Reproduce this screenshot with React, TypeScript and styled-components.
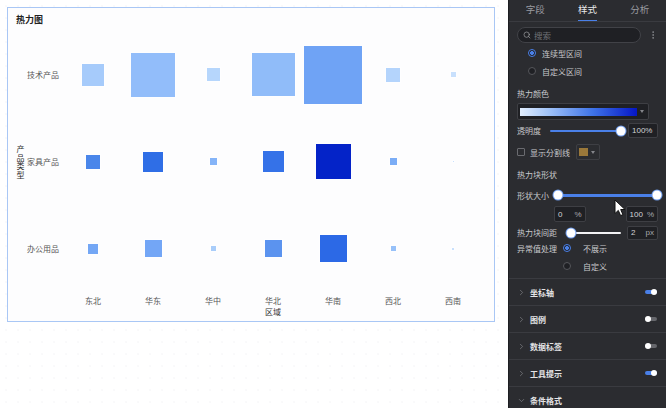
import React from 'react';
import styled, { createGlobalStyle } from 'styled-components';
import { Search, EllipsisVertical, ChevronRight, ChevronDown } from 'lucide-react';

const GlobalStyle = createGlobalStyle`
  html, body {
    margin: 0;
    padding: 0;
    background: #fff;
    font-family: "Noto Sans CJK SC", "Noto Sans", sans-serif;
  }
`;

const ROWS = ['技术产品', '家具产品', '办公用品'];
const COLS = ['东北', '华东', '华中', '华北', '华南', '西北', '西南'];

const CELLS: [number, string][][] = [
  [[22, '#a6cbfb'], [44, '#92bdfa'], [13, '#b6d6fc'], [43, '#90bcf9'], [58, '#6fa3f5'], [14, '#b4d4fc'], [5, '#c8e0fd']],
  [[14, '#4a86ea'], [20, '#2f6ee6'], [7, '#85b4f8'], [21, '#3572e8'], [35, '#0423c8'], [7, '#7badf6'], [1, '#c8e0fd']],
  [[10, '#74a7f5'], [17, '#73a6f6'], [5, '#a9cdfa'], [17, '#5b93ef'], [27, '#2c69e6'], [5, '#97c1f9'], [2, '#c8e0fd']],
];

const SECTIONS = [
  { name: '坐标轴', on: true },
  { name: '图例', on: false },
  { name: '数据标签', on: false },
  { name: '工具提示', on: true },
];

type SliderProps = { width: number; from: number; to: number; knobs: number[]; rest: string; thick: number };

const Slider = ({ width, from, to, knobs, rest, thick }: SliderProps): JSX.Element => (
  <Track
    $thick={thick}
    style={{
      width,
      background: `linear-gradient(90deg, ${rest} 0 ${from}%, #4a80e8 ${from}% ${to}%, ${rest} ${to}% 100%)`,
    }}
  >
    {knobs.map((k) => (
      <Knob key={k} style={{ left: `${k}%` }} />
    ))}
  </Track>
);

const Heatmap = (): JSX.Element => (
  <ChartCard>
    <ChartTitle>热力图</ChartTitle>
    <ChartBody>
      <AxisY>
        <AxisYText>产品类型</AxisYText>
      </AxisY>
      <RowLabels>
        {ROWS.map((r) => (
          <RowLabel key={r}>{r}</RowLabel>
        ))}
      </RowLabels>
      <Plot>
        {CELLS.map((row, ri) =>
          row.map(([size, color], ci) => (
            <Cell key={`${ri}-${ci}`}>
              <Square $size={size} $color={color} />
            </Cell>
          ))
        )}
      </Plot>
    </ChartBody>
    <XLabels>
      {COLS.map((c) => (
        <XLabel key={c}>{c}</XLabel>
      ))}
    </XLabels>
    <AxisX>区域</AxisX>
  </ChartCard>
);

const StylePanel = (): JSX.Element => (
  <Panel>
    <Tabs>
      <Tab>
        <TabLabel>字段</TabLabel>
      </Tab>
      <Tab $active>
        <TabLabel>样式</TabLabel>
        <TabLine />
      </Tab>
      <Tab>
        <TabLabel>分析</TabLabel>
      </Tab>
    </Tabs>
    <SearchRow>
      <SearchBox>
        <Search size={8} strokeWidth={2} color="#a3a4a8" />
        <Placeholder>搜索</Placeholder>
      </SearchBox>
      <MoreBtn>
        <EllipsisVertical size={10} color="#8a8b90" />
      </MoreBtn>
    </SearchRow>

    <Form>
      <Row $h={18} $mt={1} $indent={11}>
        <Radio $checked />
        <Label>连续型区间</Label>
      </Row>
      <Row $h={18} $indent={11}>
        <Radio />
        <Label>自定义区间</Label>
      </Row>
      <Row $h={18} $mt={4}>
        <Label>热力颜色</Label>
      </Row>
      <GradientSelect>
        <GradientBar />
        <Caret />
      </GradientSelect>
      <Row $h={17} $mt={2}>
        <FieldLabel $w={33}>透明度</FieldLabel>
        <Slider width={71} from={0} to={100} knobs={[100]} rest="#e6e6e8" thick={2} />
        <Input $w={32} $ml={7} $h={15}>
          <span>100%</span>
        </Input>
      </Row>
      <Row $h={16} $mt={5}>
        <Checkbox />
        <Label $ml={5}>显示分割线</Label>
        <ColorSelect>
          <Swatch />
          <Caret />
        </ColorSelect>
      </Row>
      <Row $h={18} $mt={5}>
        <Label>热力块形状</Label>
      </Row>
      <Row $h={16} $mt={4}>
        <FieldLabel $w={41}>形状大小</FieldLabel>
        <Slider width={99} from={0} to={100} knobs={[0, 100]} rest="#e6e6e8" thick={3} />
      </Row>
      <Row $h={16} $mt={3} $indent={37}>
        <Input $w={33} $h={16}>
          <span>0</span>
          <Unit>%</Unit>
        </Input>
        <Input $w={34} $ml={40} $h={16}>
          <span>100</span>
          <Unit>%</Unit>
        </Input>
      </Row>
      <Row $h={15} $mt={3}>
        <FieldLabel $w={51}>热力块间距</FieldLabel>
        <Slider width={53} from={0} to={6} knobs={[6]} rest="#f2f2f4" thick={2} />
        <Input $w={34} $ml={6} $h={14}>
          <span>2</span>
          <Unit>px</Unit>
        </Input>
      </Row>
      <Row $h={16}>
        <FieldLabel $w={46}>异常值处理</FieldLabel>
        <Radio $checked />
        <Label $ml={6}>不展示</Label>
      </Row>
      <Row $h={16} $mt={2} $indent={46}>
        <Radio />
        <Label $ml={6}>自定义</Label>
      </Row>
    </Form>

    <Sections>
      {SECTIONS.map((s) => (
        <SectionRow key={s.name}>
          <ChevronRight size={9} color="#8d8e93" strokeWidth={1.6} />
          <SectionName>{s.name}</SectionName>
          <Toggle $on={s.on}>
            <ToggleKnob $on={s.on} />
          </Toggle>
        </SectionRow>
      ))}
      <SectionRow>
        <ChevronDown size={9} color="#8d8e93" strokeWidth={1.6} />
        <SectionName>条件格式</SectionName>
      </SectionRow>
    </Sections>
  </Panel>
);

const App = (): JSX.Element => {
  return (
    <Page>
      <GlobalStyle />
      <Canvas>
        <Heatmap />
      </Canvas>
      <StylePanel />
      <Cursor width="13" height="18" viewBox="0 0 13 18">
        <path d="M1 1 L1 14.5 L4.3 11.4 L6.6 16.6 L8.9 15.6 L6.7 10.5 L11 10.5 Z" fill="#fff" stroke="#111" strokeWidth="1" strokeLinejoin="round" />
      </Cursor>
    </Page>
  );
};

export default App;

const Page = styled.div`
  position: relative;
  display: flex;
  width: 666px;
  height: 408px;
  overflow: hidden;
`;

const Canvas = styled.div`
  flex: 1;
  padding: 7px;
  background-color: #fff;
  background-image: radial-gradient(#f3f3f5 0.6px, transparent 0.8px);
  background-size: 12px 12px;
`;

const ChartCard = styled.div`
  box-sizing: border-box;
  width: 488px;
  height: 315px;
  border: 1px solid #a9c7f5;
  background: #fdfdfe;
  display: flex;
  flex-direction: column;
`;

const ChartTitle = styled.div`
  padding: 6px 0 0 8px;
  font-size: 9px;
  line-height: 12px;
  font-weight: 700;
  color: #222;
`;

const ChartBody = styled.div`
  display: flex;
  margin-top: 5px;
  height: 261px;
`;

const AxisY = styled.div`
  box-sizing: border-box;
  width: 19px;
  padding-left: 7px;
  display: flex;
  align-items: center;
`;

const AxisYText = styled.div`
  writing-mode: vertical-lr;
  text-orientation: upright;
  font-size: 8px;
  line-height: 10px;
  letter-spacing: 0.5px;
  color: #2a2a2a;
`;

const RowLabels = styled.div`
  width: 36px;
  display: flex;
  flex-direction: column;
`;

const RowLabel = styled.div`
  height: 87px;
  display: flex;
  align-items: center;
  font-size: 8px;
  color: #555;
`;

const Plot = styled.div`
  display: grid;
  grid-template-columns: repeat(7, 60px);
  grid-template-rows: repeat(3, 87px);
`;

const Cell = styled.div`
  display: flex;
  align-items: center;
  justify-content: center;
`;

const Square = styled.div<{ $size: number; $color: string }>`
  width: ${(p) => p.$size}px;
  height: ${(p) => p.$size}px;
  background: ${(p) => p.$color};
  box-shadow: 0 0 0 1px rgba(255, 255, 255, 0.55);
`;

const XLabels = styled.div`
  display: grid;
  grid-template-columns: repeat(7, 60px);
  margin: 4px 0 0 55px;
`;

const XLabel = styled.div`
  text-align: center;
  font-size: 8px;
  line-height: 10px;
  color: #555;
`;

const AxisX = styled.div`
  width: 420px;
  margin: 1px 0 0 55px;
  text-align: center;
  font-size: 8px;
  line-height: 10px;
  color: #333;
`;

const Panel = styled.div`
  box-sizing: border-box;
  width: 158px;
  height: 408px;
  flex-shrink: 0;
  overflow: hidden;
  background: #2b2c30;
  border-left: 1px solid #1d1e22;
`;

const Tabs = styled.div`
  display: flex;
  height: 22px;
  box-sizing: border-box;
  border-bottom: 1px solid #3a3b40;
`;

const Tab = styled.div<{ $active?: boolean }>`
  flex: 1;
  display: flex;
  flex-direction: column;
  align-items: center;
  font-size: 9.5px;
  color: ${(p) => (p.$active ? '#e9e9eb' : '#9a9ba0')};
`;

const TabLabel = styled.div`
  padding-top: 3px;
  line-height: 12px;
`;

const TabLine = styled.div`
  margin-top: auto;
  width: 19px;
  height: 1.5px;
  background: #4a80e8;
`;

const SearchRow = styled.div`
  display: flex;
  align-items: center;
  height: 16px;
  margin-top: 5px;
  padding: 0 8px;
`;

const SearchBox = styled.div`
  box-sizing: border-box;
  width: 124px;
  height: 16px;
  border: 1px solid #414247;
  border-radius: 8px;
  background: #1f2024;
  display: flex;
  align-items: center;
  gap: 3px;
  padding-left: 5px;
`;

const Placeholder = styled.span`
  font-size: 8.5px;
  color: #6f7075;
`;

const MoreBtn = styled.div`
  margin-left: auto;
  display: flex;
  align-items: center;
`;

const Form = styled.div`
  display: flex;
  flex-direction: column;
  padding: 0 8px;
`;

const Row = styled.div<{ $h: number; $mt?: number; $indent?: number }>`
  display: flex;
  flex-shrink: 0;
  align-items: center;
  height: ${(p) => p.$h}px;
  margin-top: ${(p) => p.$mt ?? 0}px;
  padding-left: ${(p) => p.$indent ?? 0}px;
`;

const Label = styled.span<{ $ml?: number }>`
  font-size: 8px;
  color: #c8c9cc;
  margin-left: ${(p) => p.$ml ?? 0}px;
  white-space: nowrap;
`;

const FieldLabel = styled.span<{ $w: number }>`
  width: ${(p) => p.$w}px;
  flex-shrink: 0;
  font-size: 8px;
  color: #c8c9cc;
  white-space: nowrap;
`;

const Radio = styled.span<{ $checked?: boolean }>`
  box-sizing: border-box;
  width: 8px;
  height: 8px;
  border-radius: 50%;
  margin-right: 6px;
  border: 1px solid ${(p) => (p.$checked ? '#4a80e8' : '#55565b')};
  background: ${(p) => (p.$checked ? 'radial-gradient(#4a80e8 0 1.8px, #1f2024 2.2px)' : '#1f2024')};
`;

const Checkbox = styled.span`
  box-sizing: border-box;
  width: 8px;
  height: 8px;
  border: 1px solid #6a6b70;
  border-radius: 1px;
`;

const GradientSelect = styled.div`
  box-sizing: border-box;
  width: 132px;
  height: 17px;
  flex-shrink: 0;
  margin-top: 1px;
  border: 1px solid #3e3f44;
  border-radius: 2px;
  background: #1f2024;
  display: flex;
  align-items: center;
  padding: 0 4px 0 2px;
`;

const GradientBar = styled.div`
  width: 117px;
  height: 8px;
  background: linear-gradient(90deg, #e2eefe 0%, #9fc2f8 25%, #3f74e8 62%, #0516c6 100%);
`;

const Caret = styled.span`
  margin-left: auto;
  width: 0;
  height: 0;
  border-left: 2.5px solid transparent;
  border-right: 2.5px solid transparent;
  border-top: 3px solid #85868b;
`;

const Track = styled.div<{ $thick: number }>`
  position: relative;
  flex-shrink: 0;
  height: ${(p) => p.$thick}px;
  border-radius: 2px;
`;

const Knob = styled.span`
  position: absolute;
  top: 50%;
  width: 9px;
  height: 9px;
  border-radius: 50%;
  background: #fff;
  box-shadow: 0 0 0 1px #6f9cec;
  transform: translate(-50%, -50%);
`;

const Input = styled.div<{ $w: number; $ml?: number; $h: number }>`
  box-sizing: border-box;
  width: ${(p) => p.$w}px;
  height: ${(p) => p.$h}px;
  margin-left: ${(p) => p.$ml ?? 0}px;
  border: 1px solid #3e3f44;
  border-radius: 2px;
  background: #1f2024;
  display: flex;
  align-items: center;
  justify-content: space-between;
  padding: 0 3px;
  font-family: "Liberation Sans", sans-serif;
  font-size: 8px;
  color: #d2d3d6;
`;

const Unit = styled.span`
  color: #a8a9ad;
`;

const ColorSelect = styled.div`
  box-sizing: border-box;
  width: 24px;
  height: 16px;
  margin-left: 6px;
  border: 1px solid #3e3f44;
  border-radius: 2px;
  display: flex;
  align-items: center;
  padding: 0 4px 0 2px;
`;

const Swatch = styled.span`
  width: 9px;
  height: 8px;
  background: #9a783a;
`;

const Sections = styled.div`
  margin-top: 4px;
  border-top: 1px solid #3a3b40;
`;

const SectionRow = styled.div`
  display: flex;
  align-items: center;
  height: 26px;
  border-bottom: 1px solid #3a3b40;
  padding: 0 9px 0 8px;
  gap: 4px;
`;

const SectionName = styled.span`
  font-size: 8px;
  font-weight: 700;
  color: #e3e3e5;
`;

const Toggle = styled.div<{ $on: boolean }>`
  position: relative;
  margin-left: auto;
  width: 12px;
  height: 4px;
  border-radius: 2px;
  background: ${(p) => (p.$on ? '#4a80e8' : '#66676c')};
`;

const ToggleKnob = styled.span<{ $on: boolean }>`
  position: absolute;
  top: 50%;
  left: ${(p) => (p.$on ? '9px' : '3px')};
  width: 6px;
  height: 6px;
  border-radius: 50%;
  background: #fff;
  transform: translate(-50%, -50%);
`;

const Cursor = styled.svg`
  position: absolute;
  left: 614px;
  top: 199px;
`;
